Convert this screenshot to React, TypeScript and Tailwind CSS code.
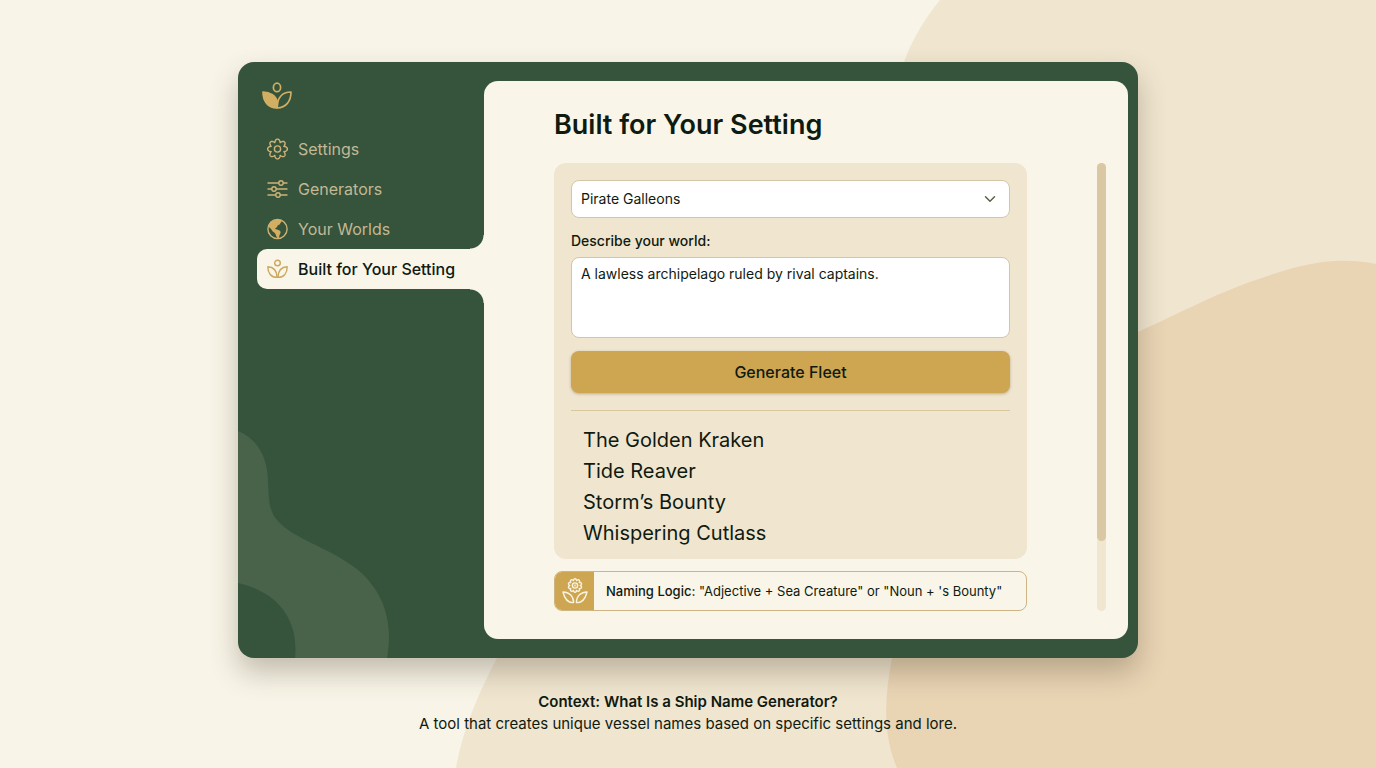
import { useState } from 'react'
import { ChevronDown } from 'lucide-react'

const navItems = [
  { label: 'Settings', icon: GearIcon },
  { label: 'Generators', icon: SlidersIcon },
  { label: 'Your Worlds', icon: GlobeIcon },
  { label: 'Built for Your Setting', icon: SproutIcon },
]

const names = ['The Golden Kraken', 'Tide Reaver', 'Storm’s Bounty', 'Whispering Cutlass']

export default function App() {
  const [active, setActive] = useState('Built for Your Setting')
  const [setting, setSetting] = useState('Pirate Galleons')
  const [world, setWorld] = useState('A lawless archipelago ruled by rival captains.')

  return (
    <div className="relative isolate flex min-h-screen flex-col items-center overflow-hidden bg-[#f8f4e7] px-4 pt-[62px] pb-8 font-['Inter',sans-serif] text-[#0f1a10]">
      <Backdrop />

      <div className="flex w-full max-w-[900px] overflow-hidden rounded-2xl bg-[#35543b] shadow-[0_14px_28px_rgba(70,60,40,0.3)]">
        {/* Sidebar */}
        <aside className="relative w-[246px] shrink-0 pt-5 pl-[19px]">
          <SidebarWave />
          <a href="#" aria-label="Home" className="ml-[5px] block w-[30px]">
            <LogoIcon />
          </a>
          <nav className="relative mt-5 flex flex-col">
            {navItems.map((item) => (
              <NavItem
                key={item.label}
                label={item.label}
                Icon={item.icon}
                active={item.label === active}
                onSelect={() => setActive(item.label)}
              />
            ))}
          </nav>
        </aside>

        {/* Main panel */}
        <main className="my-[19px] mr-[10px] min-w-0 flex-1 rounded-[14px] bg-[#f9f5e8] pt-[26px] pr-[22px] pb-7 pl-[70px]">
          <h1 className="text-[27px] leading-9 font-semibold">Built for Your Setting</h1>

          <div className="mt-5 flex gap-[70px]">
            <div className="min-w-0 flex-1">
              <form
                className="rounded-xl bg-[#f0e5cf] px-[17px] pt-[17px] pb-[10px]"
                onSubmit={(e) => e.preventDefault()}
              >
                <div className="relative">
                  <select
                    aria-label="Setting"
                    value={setting}
                    onChange={(e) => setSetting(e.target.value)}
                    className="h-[38px] w-full appearance-none rounded-lg border border-[#d3c6a8] bg-white px-[9px] text-sm"
                  >
                    <option>Pirate Galleons</option>
                    <option>Merchant Convoys</option>
                    <option>Starships</option>
                  </select>
                  <ChevronDown
                    size={18}
                    strokeWidth={2}
                    className="pointer-events-none absolute top-[10px] right-[11px] text-[#5d6147]"
                  />
                </div>

                <label htmlFor="world" className="mt-[11px] block text-sm leading-6 font-medium">
                  Describe your world:
                </label>
                <textarea
                  id="world"
                  value={world}
                  onChange={(e) => setWorld(e.target.value)}
                  className="mt-1 block h-[81px] w-full resize-none rounded-lg border border-[#d3c6a8] bg-white px-[9px] py-1 text-sm leading-6"
                />

                <button
                  type="submit"
                  className="mt-[13px] h-[42px] w-full rounded-lg bg-[#cea652] text-base font-medium shadow-[0_1px_3px_rgba(90,70,30,0.35)]"
                >
                  Generate Fleet
                </button>

                <ul className="mt-[17px] border-t border-[#d9c7a0] px-3 pt-[14px] text-xl leading-[31px]">
                  {names.map((name) => (
                    <li key={name}>{name}</li>
                  ))}
                </ul>
              </form>

              {/* Naming logic note */}
              <div className="mt-3 flex min-h-10 overflow-hidden rounded-lg border border-[#cdb482]">
                <div className="flex w-[39px] shrink-0 items-center justify-center bg-[#cea652]">
                  <FlowerIcon />
                </div>
                <p className="self-center pl-3 text-[13px] leading-5">
                  <span className="font-medium">Naming Logic:</span> "Adjective + Sea Creature" or "Noun + 's Bounty"
                </p>
              </div>
            </div>

            {/* Scroll track */}
            <div className="w-[9px] shrink-0 rounded-full bg-[#f1e6cf]">
              <div className="h-[378px] rounded-full bg-[#dac8a5]" />
            </div>
          </div>
        </main>
      </div>

      <footer className="mt-[33px] text-center text-[15px] leading-[22px]">
        <h2 className="font-semibold">Context: What Is a Ship Name Generator?</h2>
        <p>A tool that creates unique vessel names based on specific settings and lore.</p>
      </footer>
    </div>
  )
}

type NavItemProps = {
  label: string
  Icon: () => React.JSX.Element
  active: boolean
  onSelect: () => void
}

function NavItem({ label, Icon, active, onSelect }: NavItemProps) {
  return (
    <button
      type="button"
      onClick={onSelect}
      aria-current={active ? 'page' : undefined}
      className={
        active
          ? 'relative flex h-10 items-center gap-[10px] rounded-l-[10px] bg-[#f9f5e8] pl-[10px] text-base font-medium text-[#0f1a10]'
          : 'relative flex h-10 items-center gap-[10px] pl-[10px] text-base text-[#c3b896]'
      }
    >
      <Icon />
      {label}
      {active && (
        <>
          {/* Inverted corners that join the tab to the panel */}
          <span className="absolute right-0 bottom-full size-[14px] bg-[radial-gradient(circle_at_top_left,transparent_13px,#f9f5e8_14px)]" />
          <span className="absolute top-full right-0 size-[14px] bg-[radial-gradient(circle_at_bottom_left,transparent_13px,#f9f5e8_14px)]" />
        </>
      )}
    </button>
  )
}

function Backdrop() {
  return (
    <svg
      className="absolute inset-0 -z-10 h-full w-full"
      viewBox="0 0 1376 768"
      preserveAspectRatio="xMidYMid slice"
      aria-hidden="true"
    >
      <path
        d="M940 0C925 18 912 40 904 62C880 140 900 300 800 400C700 480 560 540 497 658C478 694 462 732 456 768H1376V0Z"
        fill="#f0e5cf"
      />
      <path
        d="M1376 264C1328 254 1290 268 1247 283C1205 299 1178 314 1140 331C1000 380 900 560 892 658C884 700 883 735 897 768H1376Z"
        fill="#e9d4b4"
      />
    </svg>
  )
}

function SidebarWave() {
  return (
    <svg
      className="absolute bottom-0 left-0"
      width="152"
      height="228"
      viewBox="0 0 152 228"
      fill="#48634a"
      aria-hidden="true"
    >
      <path d="M0 1C20 9 30 28 30 52C31 70 31 82 40 91C54 107 82 115 104 129C141 150 157 185 149 228H57C61 190 40 162 0 153Z" />
    </svg>
  )
}

function LogoIcon() {
  return (
    <svg width="30" height="27" viewBox="0 0 30 27" fill="none" stroke="#d2ae62" strokeWidth="1.7" strokeLinejoin="round">
      <ellipse cx="15" cy="5.4" rx="3.6" ry="4.2" />
      <path d="M1 10C8 10 14 14 15.4 20C15.6 22 15.4 24 15 25.8C6 26 1 19 1 10Z" fill="#d2ae62" />
      <path d="M29 10C21 10 15.5 15 15 25.8C24 26 29 19 29 10Z" />
    </svg>
  )
}

// Closed outline with round lobes and narrow notches
function lobedPath(cx: number, cy: number, r: number, depth: number, lobes: number) {
  const steps = lobes * 16
  const points = Array.from({ length: steps }, (_, i) => {
    const a = (i / steps) * Math.PI * 2
    const radius = r + depth * (2 * Math.abs(Math.cos((lobes * a) / 2)) ** 0.9 - 1)
    return `${(cx + radius * Math.sin(a)).toFixed(2)} ${(cy - radius * Math.cos(a)).toFixed(2)}`
  })
  return `M${points.join('L')}Z`
}

function GearIcon() {
  return (
    <svg width="21" height="22" viewBox="0 0 21 22" fill="none" stroke="#cdb377" strokeWidth="1.4" strokeLinejoin="round">
      <path d={lobedPath(10.5, 11, 8.4, 1.5, 8)} />
      <circle cx="10.5" cy="11" r="3.1" />
    </svg>
  )
}

function SlidersIcon() {
  return (
    <svg width="21" height="20" viewBox="0 0 21 20" fill="none" stroke="#cdb377" strokeWidth="1.4" strokeLinecap="round">
      <path d="M1 4H11.5M16.5 4H20M1 10H4.5M9.5 10H20M1 16H8.5M13.5 16H20" />
      <circle cx="14" cy="4" r="2.2" />
      <circle cx="7" cy="10" r="2.2" />
      <circle cx="11" cy="16" r="2.2" />
    </svg>
  )
}

function GlobeIcon() {
  return (
    <svg width="21" height="22" viewBox="0 0 21 22" fill="none">
      <circle cx="10.5" cy="11" r="9.6" stroke="#cdb377" strokeWidth="1.4" />
      <path
        d="M1.2 9C2 5 6 1.4 10.5 1.4C12.5 1.4 13.5 1.8 14.6 2.4C15 4 13.2 4.6 12.8 6C12.4 7.2 10.6 7 10.2 8.4C9.8 9.6 8.4 9.6 8 10.8C9 11.8 11 11.4 12.6 12.6C14.4 14 13.4 15.6 12.6 17C12 18.2 12.4 19.4 11.4 20.5C9.6 20 9.4 18.4 8.8 16.8C8.2 15 7.4 14.6 6 13.8C4.8 12.6 4.8 10.6 1.2 9Z"
        fill="#d2ae62"
      />
    </svg>
  )
}

function SproutIcon() {
  return (
    <svg width="21" height="20" viewBox="0 0 21 20" fill="none" stroke="#cba85c" strokeWidth="1.4" strokeLinejoin="round">
      <circle cx="10.5" cy="4" r="2.8" />
      <path d="M0.8 7.8C6 8 9.8 11.6 10.2 18.4C4 18.4 0.8 14 0.8 7.8Z" />
      <path d="M20.2 7.8C15 8 11.2 11.6 10.8 18.4C17 18.4 20.2 14 20.2 7.8Z" />
    </svg>
  )
}

function FlowerIcon() {
  return (
    <svg width="26" height="26" viewBox="0 0 26 26" fill="none" stroke="#faf3df" strokeWidth="1.4" strokeLinejoin="round">
      <path d={lobedPath(13, 7.5, 6, 0.8, 10)} />
      <circle cx="13" cy="7.5" r="2.6" />
      <path d="M13 6.6V8.4" />
      <path d="M1 14C7 14 11.6 18 11.6 24.6C6 25 2.4 20 1 14Z" />
      <path d="M25 14C19 14 14.4 18 14.4 24.6C20 25 23.6 20 25 14Z" />
    </svg>
  )
}
